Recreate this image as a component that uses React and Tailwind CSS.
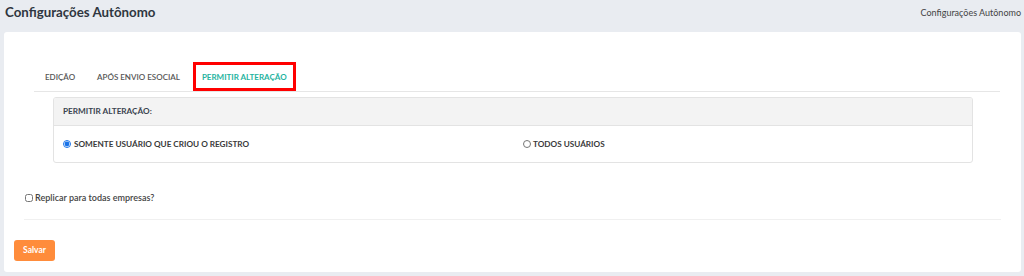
import { useState } from "react";

const tabs = ["EDIÇÃO", "APÓS ENVIO ESOCIAL", "PERMITIR ALTERAÇÃO"];

export default function App() {
  const [tab, setTab] = useState(2);
  const [option, setOption] = useState("criador");
  const [replicar, setReplicar] = useState(false);

  return (
    <div
      className="w-[1024px] h-[276px] bg-[#e9ecf1] overflow-hidden text-[#333]"
      style={{ fontFamily: "Lato, 'Open Sans', sans-serif" }}
    >
      {/* Page header */}
      <div className="flex items-center justify-between h-[32px] pl-[5px] pr-[3px] pb-[7px]">
        <h1 className="text-[13.3px] font-bold text-[#2f3640]">Configurações Autônomo</h1>
        <span className="text-[9px] text-[#444]">Configurações Autônomo</span>
      </div>

      {/* Card */}
      <div className="ml-[4px] mr-[3px] h-[240px] bg-white rounded-[3px] pt-[30px]">
        {/* Tabs */}
        <div className="ml-[30px] mr-[21px] flex items-end border-b border-[#e6e6e6] h-[30px]">
          {tabs.map((t, i) => (
            <button
              key={t}
              onClick={() => setTab(i)}
              className={
                i === 2
                  ? "h-[29px] ml-[2px] px-[6px] border-[3px] border-[#f00] text-[8px] font-bold text-[#25b3a0] flex items-center"
                  : "h-[29px] px-[11px] text-[8px] font-semibold text-[#555] flex items-center"
              }
            >
              {t}
            </button>
          ))}
        </div>

        {/* Panel */}
        <div className="ml-[49px] mr-[48px] mt-[5px] border border-[#e3e3e3] rounded-[3px] overflow-hidden">
          <div className="h-[28px] bg-[#f3f3f3] border-b border-[#e3e3e3] flex items-center pl-[9px] text-[8.2px] font-bold text-[#3a4450]">
            PERMITIR ALTERAÇÃO:
          </div>
          <div className="h-[36px] flex items-center pl-[9px] text-[8.2px] font-bold text-[#3a3a3a]">
            <label className="w-[460px] flex items-center gap-[3px]">
              <input
                type="radio"
                name="perm"
                checked={option === "criador"}
                onChange={() => setOption("criador")}
                className="w-[8px] h-[8px] m-0 accent-[#1a73e8]"
              />
              SOMENTE USUÁRIO QUE CRIOU O REGISTRO
            </label>
            <label className="flex items-center gap-[2px]">
              <input
                type="radio"
                name="perm"
                checked={option === "todos"}
                onChange={() => setOption("todos")}
                className="w-[8px] h-[8px] m-0"
              />
              TODOS USUÁRIOS
            </label>
          </div>
        </div>

        {/* Replicar */}
        <div className="ml-[20px] mr-[20px] mt-[28px] h-[29px] border-b border-[#f0f0f0] px-[1px]">
          <label className="flex items-center gap-[2px] text-[9px] font-semibold text-[#444]">
            <input
              type="checkbox"
              checked={replicar}
              onChange={(e) => setReplicar(e.target.checked)}
              className="w-[8px] h-[8px] m-0"
            />
            Replicar para todas empresas?
          </label>
        </div>

        {/* Save */}
        <div className="flex pl-[10px] mt-[20px]">
          <button className="h-[21px] w-[41px] bg-[#ff8c3b] rounded-[3px] text-white text-[8.5px] font-bold">
            Salvar
          </button>
        </div>
      </div>
    </div>
  );
}
